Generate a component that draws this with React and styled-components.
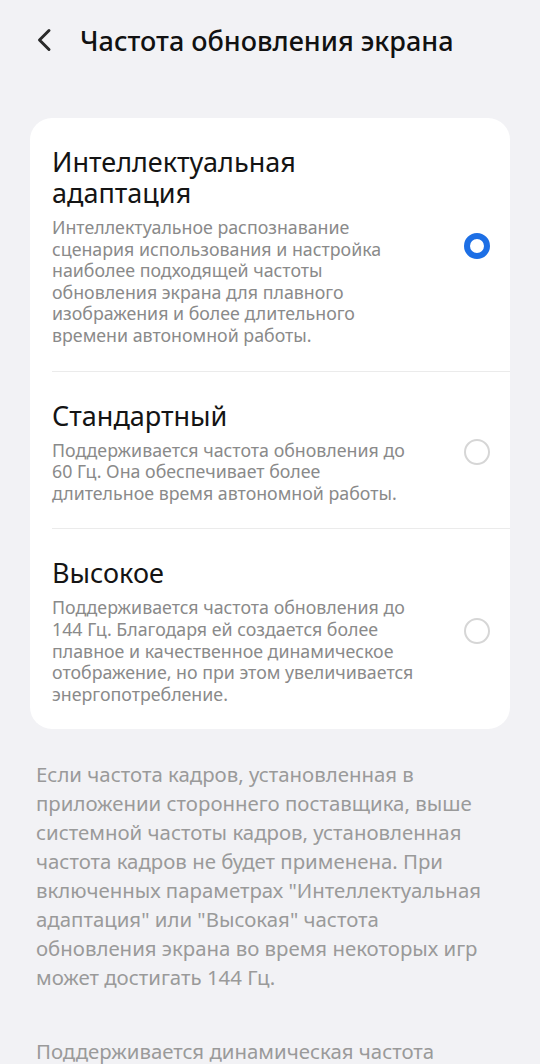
import React from "react";
import styled, { createGlobalStyle } from "styled-components";

const GlobalStyle = createGlobalStyle`
  html, body {
    margin: 0;
    padding: 0;
    background: #f2f2f5;
  }
  body {
    font-family: "Noto Sans", Roboto, sans-serif;
    -webkit-font-smoothing: antialiased;
  }
`;

const Screen = styled.div`
  width: 540px;
  height: 1064px;
  overflow: hidden;
  background: #f2f2f5;
  display: flex;
  flex-direction: column;

  & > * {
    flex-shrink: 0;
  }
`;

const Header = styled.header`
  height: 80px;
  display: flex;
  align-items: center;
  padding-left: 34px;
  gap: 26px;
`;

const BackButton = styled.button`
  border: 0;
  background: none;
  padding: 0;
  width: 20px;
  height: 24px;
  display: flex;
  align-items: center;
  justify-content: center;
  color: #2a2a2a;
`;

const Title = styled.h1`
  margin: 0;
  font-size: 27px;
  font-weight: 500;
  color: #111;
`;

const Card = styled.section`
  margin: 38px 30px 0;
  background: #fff;
  border-radius: 22px;
  display: flex;
  flex-direction: column;
`;

const Option = styled.label`
  display: flex;
  align-items: center;
  padding-left: 22px;
  cursor: pointer;
`;

const OptionBody = styled.div`
  flex: 1;
  display: flex;
  align-items: center;
  padding: 28px 20px 24px 0;
  border-bottom: ${(p) => (p.$last ? "none" : "1px solid #ebebeb")};
`;

const OptionText = styled.div`
  width: 372px;
  display: flex;
  flex-direction: column;
  gap: 9px;
`;

const OptionTitle = styled.div`
  font-size: 27px;
  line-height: 31px;
  color: #141414;
`;

const OptionDesc = styled.div`
  font-size: 17.8px;
  line-height: 21.6px;
  color: #8a8a8a;
`;

const Radio = styled.span`
  margin-left: auto;
  width: 26px;
  height: 26px;
  box-sizing: border-box;
  border-radius: 50%;
  border: ${(p) => (p.$checked ? "6.5px solid #1d6fe5" : "2px solid #d6d6d6")};
  flex-shrink: 0;
`;

const Note = styled.p`
  margin: 31px 40px 0 36px;
  font-size: 20.4px;
  line-height: 29px;
  color: #9a9a9a;
`;

const NoteNext = styled(Note)`
  margin-top: 45px;
`;

const Chevron = () => (
  <svg width="16" height="24" viewBox="0 0 16 24" fill="none">
    <path d="M13 2.5 L3.5 12 L13 21.5" stroke="currentColor" strokeWidth="3" strokeLinecap="round" strokeLinejoin="round" />
  </svg>
);

const options = [
  {
    title: "Интеллектуальная адаптация",
    desc: "Интеллектуальное распознавание сценария использования и настройка наиболее подходящей частоты обновления экрана для плавного изображения и более длительного времени автономной работы.",
    checked: true,
  },
  {
    title: "Стандартный",
    desc: "Поддерживается частота обновления до 60 Гц. Она обеспечивает более длительное время автономной работы.",
    checked: false,
  },
  {
    title: "Высокое",
    desc: "Поддерживается частота обновления до 144 Гц. Благодаря ей создается более плавное и качественное динамическое отображение, но при этом увеличивается энергопотребление.",
    checked: false,
  },
];

export default function App() {
  return (
    <>
      <GlobalStyle />
      <Screen>
        <Header>
          <BackButton aria-label="Назад">
            <Chevron />
          </BackButton>
          <Title>Частота обновления экрана</Title>
        </Header>
        <Card>
          {options.map((o, i) => (
            <Option key={o.title}>
              <OptionBody $last={i === options.length - 1}>
                <OptionText>
                  <OptionTitle>{o.title}</OptionTitle>
                  <OptionDesc>{o.desc}</OptionDesc>
                </OptionText>
                <Radio $checked={o.checked} />
              </OptionBody>
            </Option>
          ))}
        </Card>
        <Note>
          Если частота кадров, установленная в приложении стороннего поставщика, выше системной частоты кадров, установленная частота кадров не будет применена. При включенных параметрах "Интеллектуальная адаптация" или "Высокая" частота обновления экрана во время некоторых игр может достигать 144 Гц.
        </Note>
        <NoteNext>
          Поддерживается динамическая частота обновления экрана.
        </NoteNext>
      </Screen>
    </>
  );
}
